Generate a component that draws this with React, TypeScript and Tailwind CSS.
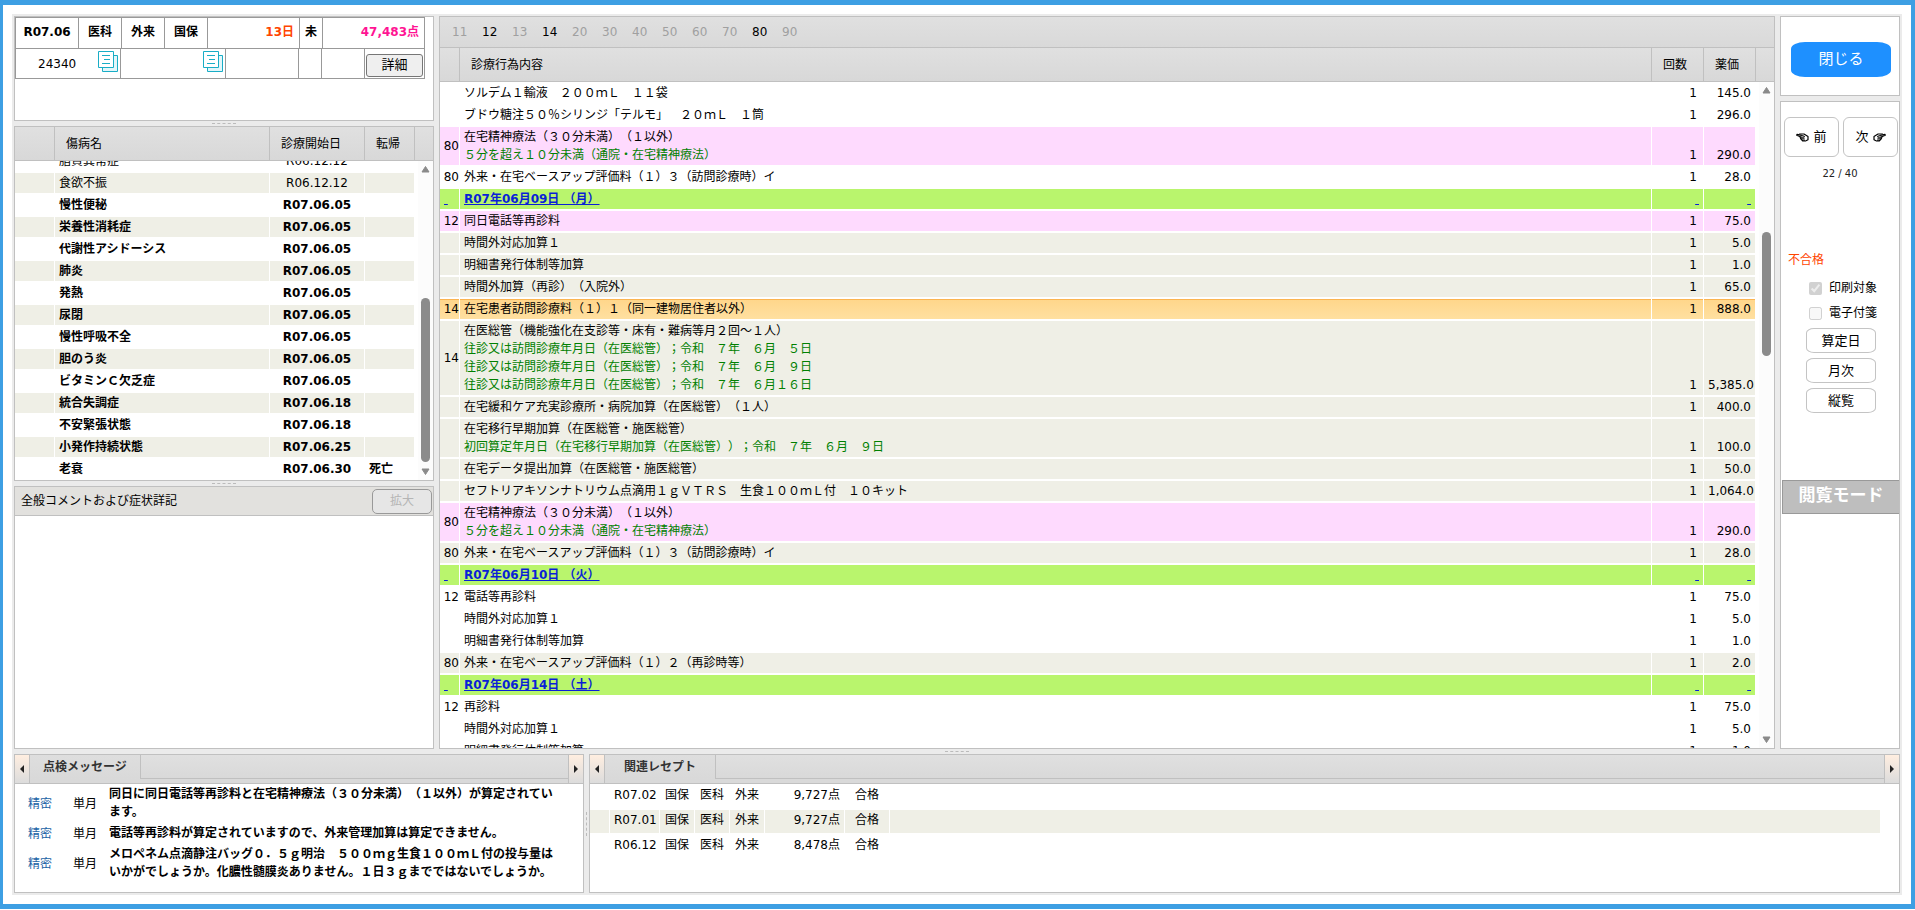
import clsx from "clsx";

const diseases = [
  { name: "脂質異常症", date: "R06.12.12", result: "", bold: false },
  { name: "食欲不振", date: "R06.12.12", result: "", bold: false },
  { name: "慢性便秘", date: "R07.06.05", result: "", bold: true },
  { name: "栄養性消耗症", date: "R07.06.05", result: "", bold: true },
  { name: "代謝性アシドーシス", date: "R07.06.05", result: "", bold: true },
  { name: "肺炎", date: "R07.06.05", result: "", bold: true },
  { name: "発熱", date: "R07.06.05", result: "", bold: true },
  { name: "尿閉", date: "R07.06.05", result: "", bold: true },
  { name: "慢性呼吸不全", date: "R07.06.05", result: "", bold: true },
  { name: "胆のう炎", date: "R07.06.05", result: "", bold: true },
  { name: "ビタミンＣ欠乏症", date: "R07.06.05", result: "", bold: true },
  { name: "統合失調症", date: "R07.06.18", result: "", bold: true },
  { name: "不安緊張状態", date: "R07.06.18", result: "", bold: true },
  { name: "小発作持続状態", date: "R07.06.25", result: "", bold: true },
  { name: "老衰", date: "R07.06.30", result: "死亡", bold: true },
];

const tones: any = {
  white: "bg-white",
  gray: "bg-[#efefe6]",
  pink: "bg-[#fedafe]",
  green: "bg-[#b9f56d]",
  orange: "bg-linear-to-b from-[#ffd68a] to-[#ffe0a0] shadow-[inset_0_1px_#fbb450]",
};

const acts = [
  { code: "", lines: ["ソルデム１輸液　２００ｍＬ　１１袋"], price: "145.0", tone: "white" },
  { code: "", lines: ["ブドウ糖注５０％シリンジ「テルモ」　２０ｍＬ　１筒"], price: "296.0", tone: "white" },
  {
    code: "80",
    lines: ["在宅精神療法（３０分未満）（１以外）", "５分を超え１０分未満（通院・在宅精神療法）"],
    price: "290.0",
    tone: "pink",
  },
  { code: "80", lines: ["外来・在宅ベースアップ評価料（１）３（訪問診療時）イ"], price: "28.0", tone: "white" },
  { date: "R07年06月09日 （月）", tone: "green" },
  { code: "12", lines: ["同日電話等再診料"], price: "75.0", tone: "pink" },
  { code: "", lines: ["時間外対応加算１"], price: "5.0", tone: "gray" },
  { code: "", lines: ["明細書発行体制等加算"], price: "1.0", tone: "gray" },
  { code: "", lines: ["時間外加算（再診）（入院外）"], price: "65.0", tone: "gray" },
  { code: "14", lines: ["在宅患者訪問診療料（１）１（同一建物居住者以外）"], price: "888.0", tone: "orange" },
  {
    code: "14",
    lines: [
      "在医総管（機能強化在支診等・床有・難病等月２回～１人）",
      "往診又は訪問診療年月日（在医総管）；令和　７年　６月　５日",
      "往診又は訪問診療年月日（在医総管）；令和　７年　６月　９日",
      "往診又は訪問診療年月日（在医総管）；令和　７年　６月１６日",
    ],
    price: "5,385.0",
    tone: "gray",
  },
  { code: "", lines: ["在宅緩和ケア充実診療所・病院加算（在医総管）（１人）"], price: "400.0", tone: "gray" },
  {
    code: "",
    lines: [
      "在宅移行早期加算（在医総管・施医総管）",
      "初回算定年月日（在宅移行早期加算（在医総管））；令和　７年　６月　９日",
    ],
    price: "100.0",
    tone: "gray",
  },
  { code: "", lines: ["在宅データ提出加算（在医総管・施医総管）"], price: "50.0", tone: "gray" },
  {
    code: "",
    lines: ["セフトリアキソンナトリウム点滴用１ｇＶＴＲＳ　生食１００ｍＬ付　１０キット"],
    price: "1,064.0",
    tone: "gray",
  },
  {
    code: "80",
    lines: ["在宅精神療法（３０分未満）（１以外）", "５分を超え１０分未満（通院・在宅精神療法）"],
    price: "290.0",
    tone: "pink",
  },
  { code: "80", lines: ["外来・在宅ベースアップ評価料（１）３（訪問診療時）イ"], price: "28.0", tone: "gray" },
  { date: "R07年06月10日 （火）", tone: "green" },
  { code: "12", lines: ["電話等再診料"], price: "75.0", tone: "white" },
  { code: "", lines: ["時間外対応加算１"], price: "5.0", tone: "white" },
  { code: "", lines: ["明細書発行体制等加算"], price: "1.0", tone: "white" },
  { code: "80", lines: ["外来・在宅ベースアップ評価料（１）２（再診時等）"], price: "2.0", tone: "gray" },
  { date: "R07年06月14日 （土）", tone: "green" },
  { code: "12", lines: ["再診料"], price: "75.0", tone: "white" },
  { code: "", lines: ["時間外対応加算１"], price: "5.0", tone: "white" },
  { code: "", lines: ["明細書発行体制等加算"], price: "1.0", tone: "white" },
];

const codes = ["11", "12", "13", "14", "20", "30", "40", "50", "60", "70", "80", "90"];
const activeCodes = ["12", "14", "80"];

const messages = [
  "同日に同日電話等再診料と在宅精神療法（３０分未満）（１以外）が算定されています。",
  "電話等再診料が算定されていますので、外来管理加算は算定できません。",
  "メロペネム点滴静注バッグ０．５ｇ明治　５００ｍｇ生食１００ｍＬ付の投与量はいかがでしょうか。化膿性髄膜炎ありません。１日３ｇまでではないでしょうか。",
];

const receipts = [
  { month: "R07.02", points: "9,727点" },
  { month: "R07.01", points: "9,727点" },
  { month: "R06.12", points: "8,478点" },
];

const CopyIcon = () => (
  <svg width="21" height="22" viewBox="0 0 21 22" fill="none" stroke="#19adc6" className="shrink-0">
    <path d="M4.5 4.5h15v16h-15z" fill="#e3f6fa" />
    <path d="M0.5 0.5h15v16h-15z" fill="#fff" />
    <path d="M4 4.5h8M6 8.5h6M4 12.5h8" />
  </svg>
);

const HandIcon = ({ right }: any) => (
  <svg
    width="13"
    height="9"
    viewBox="0 0 13 9"
    fill="none"
    stroke="#000"
    strokeLinejoin="round"
    strokeLinecap="round"
    className={right ? "-scale-x-100" : ""}
  >
    <path d="M5.5 2.4L1 1.2Q0.3 2.2 1.2 2.6L5 4" strokeWidth="1.1" />
    <path d="M3.5 1h4.5L12 3.4v3.4L9.5 8H6.8L5 6.2L4.2 4.4" strokeWidth="1.2" />
    <path d="M5 4.2h3M5.4 5.8h2.8M6.6 7.2h2M6.5 2.6l2 .8" strokeWidth="1" />
  </svg>
);

const ScrollArrow = ({ down }: any) => (
  <svg width="9" height="8" viewBox="0 0 9 8" className="shrink-0">
    <path
      d={down ? "M1 1h7L4.5 6.5z" : "M1 7h7L4.5 1.5z"}
      fill="#8a8a8a"
      stroke="#8a8a8a"
      strokeLinejoin="round"
    />
  </svg>
);

const ScrollBar = ({ before, thumb }: any) => (
  <div className="w-[15px] shrink-0 bg-[#fcfcfc] flex flex-col items-center py-1">
    <ScrollArrow />
    <div className="shrink-0" style={{ height: before }}></div>
    <div className="w-[9px] rounded-full bg-[#8b8b8b] shrink-0" style={{ height: thumb }}></div>
    <div className="flex-1"></div>
    <ScrollArrow down />
  </div>
);

const Grip = ({ vertical }: any) =>
  vertical ? (
    <div className="w-[5px] shrink-0 flex items-center justify-center">
      <div className="h-6 border-l border-dashed border-[#bbb]"></div>
    </div>
  ) : (
    <div className="h-[5px] shrink-0 flex items-center justify-center">
      <div className="w-6 border-t border-dashed border-[#bbb]"></div>
    </div>
  );

const Th = ({ children }: any) => (
  <th className="h-[34px] pl-[11px] text-left font-normal whitespace-nowrap border-r border-b border-[#c0c0c0] bg-linear-to-b from-[#e0e0e0] to-[#d8d8d8]">
    {children}
  </th>
);

const HeadEnd = () => (
  <div className="w-[18px] shrink-0 border-b border-[#c0c0c0] bg-linear-to-b from-[#e0e0e0] to-[#d8d8d8]"></div>
);

const TabArrow = ({ right }: any) => (
  <button
    aria-label={right ? "次のタブ" : "前のタブ"}
    className={clsx(
      "w-[15px] shrink-0 flex items-center justify-center border-[#c0c0c0] bg-linear-to-b from-[#ffeee0] to-[#dcdcdc]",
      right ? "border-l" : "border-r"
    )}
  >
    <svg width="4" height="8" viewBox="0 0 4 8" fill="#222">
      <path d={right ? "M0 0l4 4l-4 4z" : "M4 0l-4 4l4 4z"} />
    </svg>
  </button>
);

const TabStrip = ({ title }: any) => (
  <div className="h-[29px] shrink-0 flex border-b border-[#c0c0c0] bg-[#d9d9d9]">
    <TabArrow />
    <button className="w-[111px] h-6 text-center font-bold text-[#333] border-r border-[#c0c0c0] bg-linear-to-b from-[#dedede] to-[#d9d9d9]">
      {title}
    </button>
    <div className="flex-1 h-6 border-b border-[#c0c0c0] bg-linear-to-b from-[#e0e0e0] to-[#d9d9d9]"></div>
    <TabArrow right />
  </div>
);

const DiseaseCols = () => (
  <colgroup>
    <col className="w-10" />
    <col />
    <col className="w-[95px]" />
    <col className="w-[50px]" />
  </colgroup>
);

const ActCols = () => (
  <colgroup>
    <col className="w-5" />
    <col />
    <col className="w-[52px]" />
    <col className="w-[52px]" />
  </colgroup>
);

const tableClass = "table-fixed border-separate border-spacing-0 w-full";
const cellClass = "border-r border-b-2 border-white bg-clip-padding py-px";

const PatientPanel = () => (
  <div className="h-[105px] shrink-0 border border-[#c0c0c0] bg-white">
    <div className="w-[410px] border-l border-t border-[#999]">
      <div className="flex h-[31px] font-bold text-center leading-[29px] border-b border-[#999]">
        <div className="w-[63px] border-r border-[#999]">R07.06</div>
        <div className="w-[43px] border-r border-[#999]">医科</div>
        <div className="w-[43px] border-r border-[#999]">外来</div>
        <div className="w-[43px] border-r border-[#999]">国保</div>
        <div className="w-[92px] border-r border-[#999] text-right pr-[5px] text-[#ff4500]">13日</div>
        <div className="w-[23px] border-r border-[#999]">未</div>
        <div className="flex-1 border-r border-[#999] text-right pr-[5px] text-[#ff1493]">47,483点</div>
      </div>
      <div className="flex h-[30px] leading-[27px] border-b border-[#999]">
        <div className="w-[105px] border-r border-[#999] flex justify-between pl-[22px] pr-px pt-[2px]">
          24340
          <CopyIcon />
        </div>
        <div className="w-[105px] border-r border-[#999] flex justify-end pr-px pt-[2px]">
          <CopyIcon />
        </div>
        <div className="w-[73px] border-r border-[#999]"></div>
        <div className="w-[23px] border-r border-[#999]"></div>
        <div className="w-[43px] border-r border-[#999]"></div>
        <div className="flex-1 border-r border-[#999] p-px pt-[3px]">
          <button className="w-full h-[23px] leading-[20px] text-[13px] border border-[#767676] rounded-[3px] bg-[#efefef]">
            詳細
          </button>
        </div>
      </div>
    </div>
  </div>
);

const DiseasePanel = () => (
  <div className="h-[355px] shrink-0 flex flex-col border border-[#c0c0c0] bg-white">
    <div className="flex">
      <table className={tableClass}>
        <DiseaseCols />
        <thead>
          <tr>
            <Th></Th>
            <Th>傷病名</Th>
            <Th>診療開始日</Th>
            <Th>転帰</Th>
          </tr>
        </thead>
      </table>
      <HeadEnd />
    </div>
    <div className="flex-1 min-h-0 flex overflow-hidden">
      <div className="flex-1 mr-[3px] overflow-hidden">
        <table className={clsx(tableClass, "-mt-[10px]")}>
          <DiseaseCols />
          <tbody>
            {diseases.map((item, index) => (
              <tr
                key={index}
                className={clsx(
                  index % 2 === 1 ? "bg-[#efefe6]" : "bg-white",
                  item.bold && "font-bold"
                )}
              >
                <td className={cellClass}></td>
                <td className={clsx(cellClass, "pl-1")}>{item.name}</td>
                <td className={clsx(cellClass, "text-center")}>{item.date}</td>
                <td className={clsx(cellClass, "pl-1")}>{item.result}</td>
              </tr>
            ))}
          </tbody>
        </table>
      </div>
      <ScrollBar before={125} thumb={164} />
    </div>
  </div>
);

const CommentPanel = () => (
  <div className="flex-1 min-h-0 flex flex-col border border-[#c0c0c0] bg-white">
    <div className="h-[29px] shrink-0 flex items-center justify-between pl-[6px] pr-px border-b border-[#c0c0c0] bg-[#e2e1de]">
      <label htmlFor="comment">全般コメントおよび症状詳記</label>
      <button
        disabled
        className="w-[60px] h-[25px] border border-[#999] rounded-[5px] bg-[#e6e6e6] text-[#b5b5b5]"
      >
        拡大
      </button>
    </div>
    <textarea id="comment" readOnly className="flex-1 resize-none outline-none bg-white"></textarea>
  </div>
);

const ActPanel = () => (
  <div className="flex-1 min-w-0 flex flex-col border border-[#c0c0c0] bg-white">
    <div className="h-[31px] shrink-0 flex items-center pl-3 pb-px border-b border-[#c0c0c0] bg-linear-to-b from-[#e0e0e0] to-[#d9d9d9]">
      {codes.map((code) => (
        <button
          key={code}
          className={clsx(
            "w-[30px] text-left",
            activeCodes.includes(code) ? "text-black" : "text-[#a0a0a0]"
          )}
        >
          {code}
        </button>
      ))}
    </div>
    <div className="flex">
      <table className={tableClass}>
        <ActCols />
        <thead>
          <tr>
            <Th></Th>
            <Th>診療行為内容</Th>
            <Th>回数</Th>
            <Th>薬価</Th>
          </tr>
        </thead>
      </table>
      <HeadEnd />
    </div>
    <div className="flex-1 min-h-0 flex overflow-hidden">
      <div className="flex-1 mr-[3px] pt-px overflow-hidden">
        <table className={tableClass}>
          <ActCols />
          <tbody>
            {acts.map((item: any, index) =>
              item.date ? (
                <tr key={index} className="text-[#0a1fd6] underline">
                  <td className={clsx(cellClass, tones.green, "pl-1")}>
                    <a href="#">&nbsp;</a>
                  </td>
                  <td className={clsx(cellClass, tones.green, "pl-1 font-bold")}>
                    <a href="#">{item.date}</a>
                  </td>
                  <td className={clsx(cellClass, tones.green, "pr-1 text-right")}>
                    <a href="#">&nbsp;</a>
                  </td>
                  <td className={clsx(cellClass, tones.green, "pr-1 text-right")}>
                    <a href="#">&nbsp;</a>
                  </td>
                </tr>
              ) : (
                <tr key={index}>
                  <td className={clsx(cellClass, tones[item.tone], "text-right")}>{item.code}</td>
                  <td className={clsx(cellClass, tones[item.tone], "pl-1 whitespace-nowrap")}>
                    {item.lines.map((line: any, i: any) => (
                      <div key={i} className={i > 0 ? "text-[#008000]" : ""}>
                        {line}
                      </div>
                    ))}
                  </td>
                  <td className={clsx(cellClass, tones[item.tone], "pr-[6px] text-right align-bottom")}>1</td>
                  <td className={clsx(cellClass, tones[item.tone], "px-1 text-right align-bottom")}>
                    {item.price}
                  </td>
                </tr>
              )
            )}
          </tbody>
        </table>
      </div>
      <ScrollBar before={138} thumb={124} />
    </div>
  </div>
);

const SidePanel = () => (
  <div className="w-[120px] shrink-0 flex flex-col gap-[5px]">
    <div className="h-20 shrink-0 pt-[25px] pl-[10px] border border-[#c0c0c0] bg-white">
      <button className="w-[100px] h-[35px] pb-[2px] rounded-[14px/7px] bg-[#1e90ff] text-white text-[15px]">
        閉じる
      </button>
    </div>
    <div className="flex-1 border border-[#c0c0c0] bg-white">
      <div className="flex gap-1 pt-[15px] pl-[3px] pr-px text-[13px]">
        <button className="flex-1 h-10 flex items-center justify-center gap-1 border border-[#c4c4c4] rounded-md">
          <HandIcon />前
        </button>
        <button className="flex-1 h-10 flex items-center justify-center gap-1 border border-[#c4c4c4] rounded-md">
          次<HandIcon right />
        </button>
      </div>
      <div className="mt-2 text-center text-[10px] text-[#222]">22 / 40</div>
      <div className="mt-[68px] pl-[7px] text-[#ff4500]">不合格</div>
      <div className="mt-[11px] pl-7 flex flex-col gap-2">
        <label className="flex items-center gap-[7px] leading-[17px]">
          <input type="checkbox" defaultChecked disabled className="size-[13px]" />
          印刷対象
        </label>
        <label className="flex items-center gap-[7px] leading-[17px]">
          <input type="checkbox" disabled className="size-[13px]" />
          電子付箋
        </label>
      </div>
      <div className="mt-[6px] pl-[25px] flex flex-col gap-[5px] text-[13px]">
        <button className="w-[70px] h-[25px] border border-[#c4c4c4] rounded-[8px/5px]">算定日</button>
        <button className="w-[70px] h-[25px] border border-[#c4c4c4] rounded-[8px/5px]">月次</button>
        <button className="w-[70px] h-[25px] border border-[#c4c4c4] rounded-[8px/5px]">縦覧</button>
      </div>
      <div className="mt-[67px] ml-px h-[34px] border border-r-0 border-[#999] bg-[#bebebe] text-white font-bold text-[17px] leading-[28px] text-center">
        閲覧モード
      </div>
    </div>
  </div>
);

const MessagePanel = () => (
  <div className="w-[570px] shrink-0 flex flex-col border border-[#c0c0c0] bg-white">
    <TabStrip title="点検メッセージ" />
    <table className={tableClass}>
      <colgroup>
        <col className="w-[54px]" />
        <col className="w-10" />
        <col />
      </colgroup>
      <tbody>
        {messages.map((text, index) => (
          <tr key={index}>
            <td className="py-px pl-[13px] text-[#1a62a5]">精密</td>
            <td className="py-px pl-1">単月</td>
            <td className="py-px pr-6 border-b border-white font-bold">{text}</td>
          </tr>
        ))}
      </tbody>
    </table>
  </div>
);

const ReceiptPanel = () => (
  <div className="flex-1 min-w-0 flex flex-col border border-[#c0c0c0] bg-white">
    <TabStrip title="関連レセプト" />
    <div className="pr-[18px] pt-px">
      <table className={tableClass}>
        <colgroup>
          <col className="w-5" />
          <col className="w-[50px]" />
          <col className="w-[35px]" />
          <col className="w-[35px]" />
          <col className="w-[35px]" />
          <col className="w-20" />
          <col className="w-[45px]" />
          <col />
        </colgroup>
        <tbody>
          {receipts.map((item, index) => (
            <tr key={index} className={clsx("h-[25px] align-top", index % 2 === 1 && "bg-[#efefe6]")}>
              <td className={cellClass}></td>
              <td className={clsx(cellClass, "pl-1 whitespace-nowrap")}>{item.month}</td>
              <td className={clsx(cellClass, "text-center")}>国保</td>
              <td className={clsx(cellClass, "text-center")}>医科</td>
              <td className={clsx(cellClass, "text-center")}>外来</td>
              <td className={clsx(cellClass, "pr-1 text-right")}>{item.points}</td>
              <td className={clsx(cellClass, "text-center")}>合格</td>
              <td className={cellClass}></td>
            </tr>
          ))}
        </tbody>
      </table>
    </div>
  </div>
);

const App = () => {
  return (
    <div className="h-[calc(100vh-1px)] border-[#3d9fe3] border-y-[5px] border-l-[3px] border-r-4 bg-white p-[9px] text-[12px] leading-[18px] text-black font-['DejaVu_Sans','Noto_Sans_CJK_JP',sans-serif] [text-spacing-trim:space-all]">
      <div className="h-full flex flex-col p-[2px] bg-[#ebebeb]">
        <div className="flex-1 min-h-0 flex gap-[5px]">
          <div className="w-[420px] shrink-0 flex flex-col">
            <PatientPanel />
            <Grip />
            <DiseasePanel />
            <Grip />
            <CommentPanel />
          </div>
          <ActPanel />
          <SidePanel />
        </div>
        <Grip />
        <div className="h-[139px] shrink-0 flex">
          <MessagePanel />
          <Grip vertical />
          <ReceiptPanel />
        </div>
      </div>
    </div>
  );
};

export default App;
